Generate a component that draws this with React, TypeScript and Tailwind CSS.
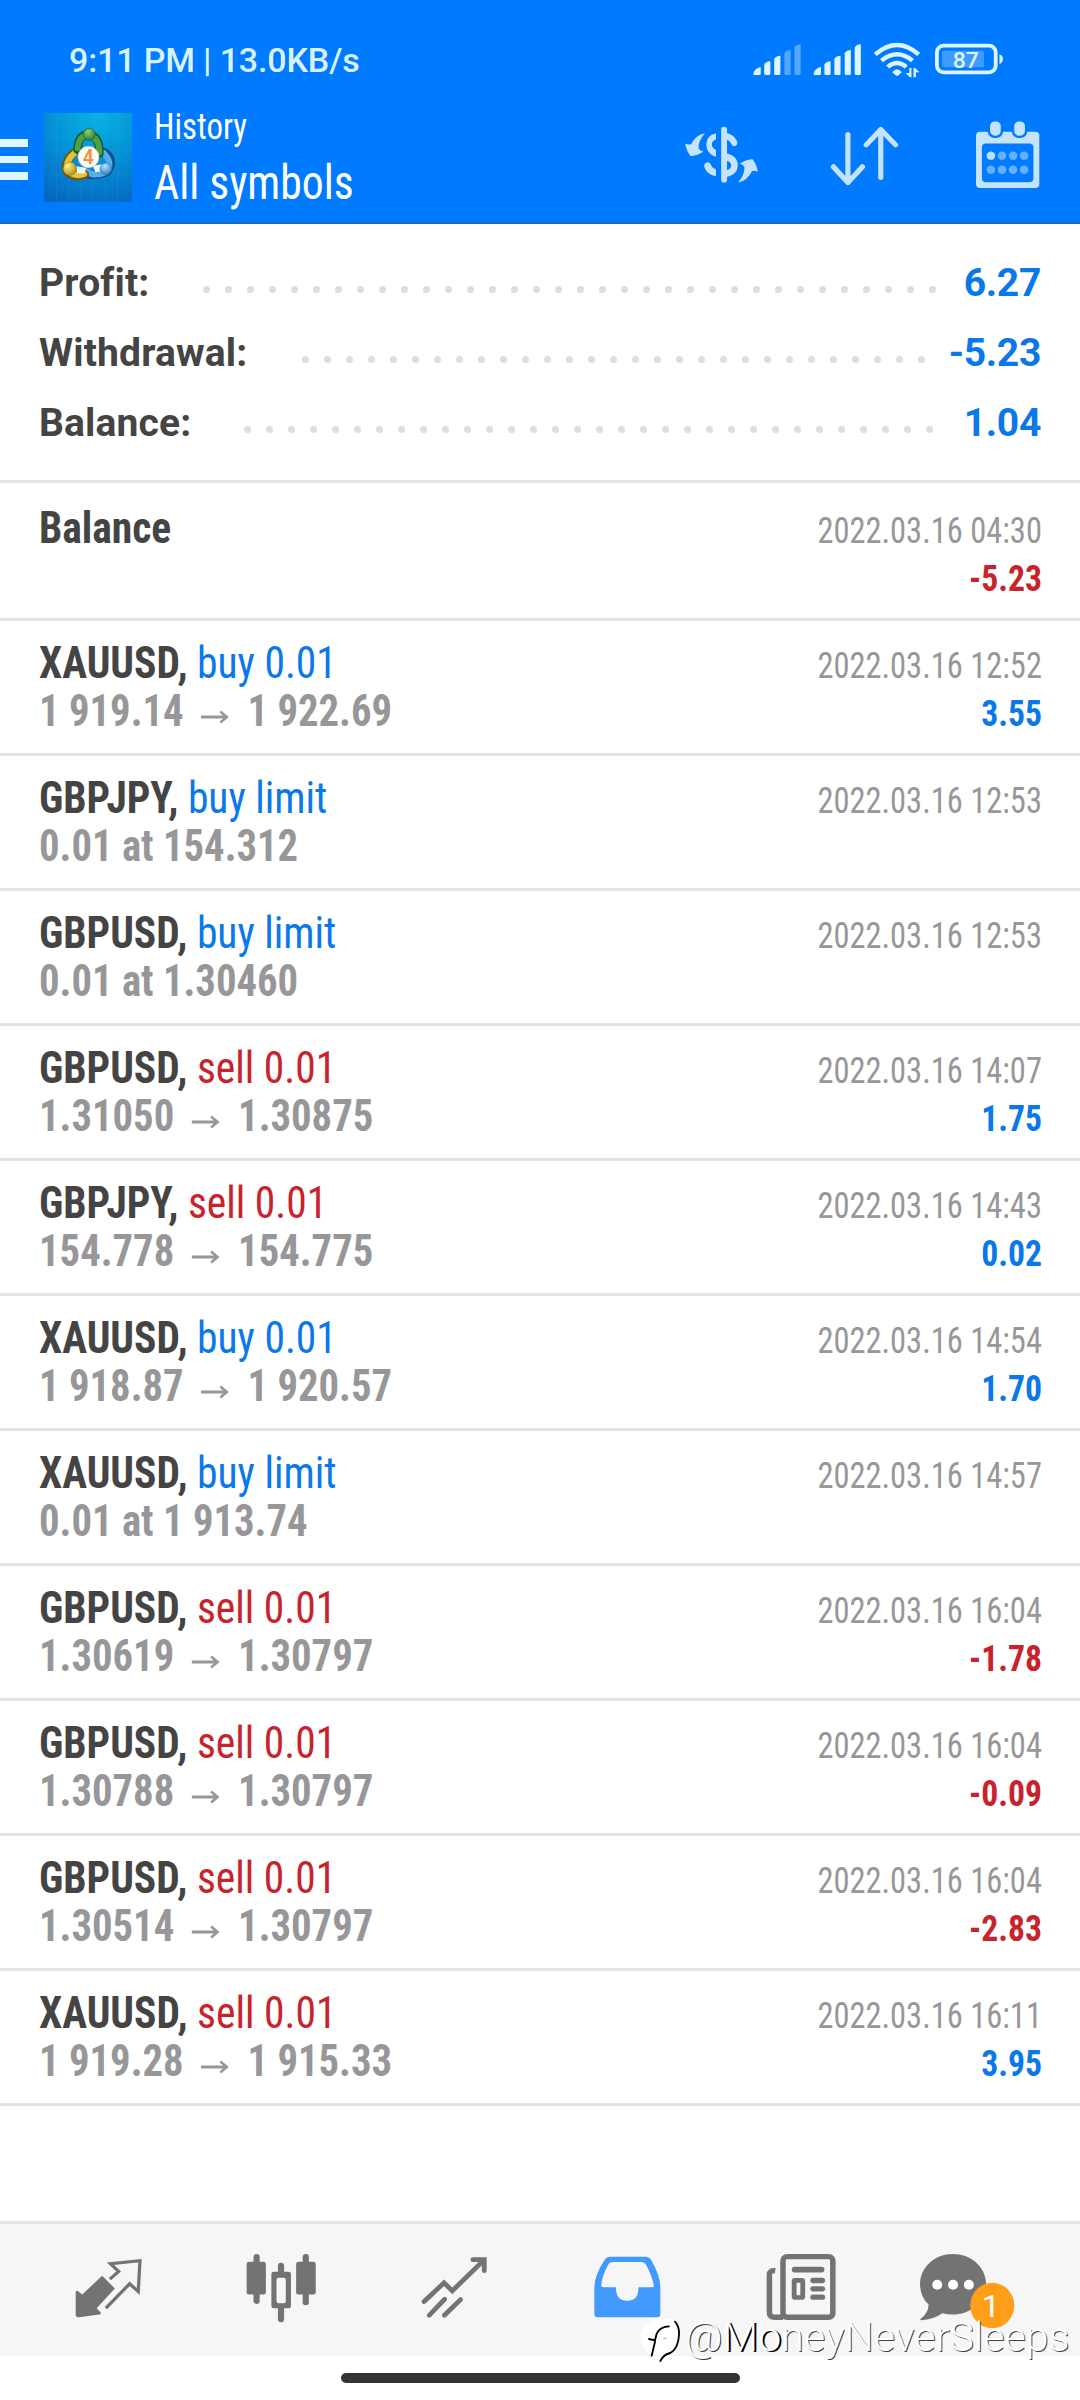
import type { ReactNode } from 'react';

type Side = 'buy' | 'sell';

interface Deal {
  symbol: string;
  side: Side;
  action: string;
  detail?: string;
  from?: string;
  to?: string;
  time: string;
  profit?: string;
}

const deals: Deal[] = [
  { symbol: 'XAUUSD', side: 'buy', action: 'buy 0.01', from: '1 919.14', to: '1 922.69', time: '2022.03.16 12:52', profit: '3.55' },
  { symbol: 'GBPJPY', side: 'buy', action: 'buy limit', detail: '0.01 at 154.312', time: '2022.03.16 12:53' },
  { symbol: 'GBPUSD', side: 'buy', action: 'buy limit', detail: '0.01 at 1.30460', time: '2022.03.16 12:53' },
  { symbol: 'GBPUSD', side: 'sell', action: 'sell 0.01', from: '1.31050', to: '1.30875', time: '2022.03.16 14:07', profit: '1.75' },
  { symbol: 'GBPJPY', side: 'sell', action: 'sell 0.01', from: '154.778', to: '154.775', time: '2022.03.16 14:43', profit: '0.02' },
  { symbol: 'XAUUSD', side: 'buy', action: 'buy 0.01', from: '1 918.87', to: '1 920.57', time: '2022.03.16 14:54', profit: '1.70' },
  { symbol: 'XAUUSD', side: 'buy', action: 'buy limit', detail: '0.01 at 1 913.74', time: '2022.03.16 14:57' },
  { symbol: 'GBPUSD', side: 'sell', action: 'sell 0.01', from: '1.30619', to: '1.30797', time: '2022.03.16 16:04', profit: '-1.78' },
  { symbol: 'GBPUSD', side: 'sell', action: 'sell 0.01', from: '1.30788', to: '1.30797', time: '2022.03.16 16:04', profit: '-0.09' },
  { symbol: 'GBPUSD', side: 'sell', action: 'sell 0.01', from: '1.30514', to: '1.30797', time: '2022.03.16 16:04', profit: '-2.83' },
  { symbol: 'XAUUSD', side: 'sell', action: 'sell 0.01', from: '1 919.28', to: '1 915.33', time: '2022.03.16 16:11', profit: '3.95' },
];

const summary = [
  { label: 'Profit:', value: '6.27', dots: 34, width: 'w-[105px]' },
  { label: 'Withdrawal:', value: '-5.23', dots: 29, width: 'w-[116px]' },
  { label: 'Balance:', value: '1.04', dots: 32, width: 'w-[108px]' },
];

function StatusIcons() {
  const bars = [
    { x: 0, y: 201 },
    { x: 31, y: 184 },
    { x: 60, y: 167 },
    { x: 90, y: 150 },
    { x: 119, y: 133 },
  ];
  return (
    <svg className="h-[40px] w-[258px]" viewBox="600 120 750 120" preserveAspectRatio="none" fill="#dcf5ff">
      {[619, 794].map((x0, g) =>
        bars.map((b, i) => (
          <path
            key={`${g}-${i}`}
            opacity={g === 0 && i > 2 ? 0.38 : 1}
            d={
              i === 0
                ? `M${x0} 225v-6q4 -14 21 -18v20q0 4 -4 4z`
                : `M${x0 + b.x} 221V${b.y + 10}q4 -9 18 -10V221q0 4 -4 4h-10q-4 0 -4 -4z`
            }
          />
        )),
      )}
      <g fill="none" stroke="#dcf5ff" strokeWidth="13">
        <path d="M973 163q63 -56 126 0" />
        <path d="M991 182q45 -38 90 0" />
        <path d="M1009 201q27 -24 54 0" />
      </g>
      <path d="M1022 217q14 -18 28 0l-10 9q-4 3 -8 0z" />
      <path d="M1072 204h6v28h-4l-13 -13h11zM1084 232v-28h5l12 13h-10v15z" />
      <rect x="1152" y="137" width="171" height="80" rx="20" fill="none" stroke="#dcf5ff" strokeWidth="11" />
      <rect x="1167" y="152" width="122" height="50" rx="5" opacity="0.28" />
      <path d="M1334 163q10 3 10 14t-10 15z" />
      <text x="1236" y="204" textAnchor="middle" fontSize="67" fontFamily="Roboto, sans-serif" fontWeight="500">
        87
      </text>
    </svg>
  );
}

function AppLogo() {
  return (
    <svg className="h-[89px] w-[88px]" viewBox="10 38 267 267" preserveAspectRatio="none">
      <defs>
        <radialGradient id="sky" cx="0.6" cy="0" r="1.1">
          <stop offset="0" stopColor="#06b4e0" />
          <stop offset="0.5" stopColor="#0590d6" />
          <stop offset="1" stopColor="#0567c0" />
        </radialGradient>
        <radialGradient id="gr" cx="0.4" cy="0.3" r="0.8">
          <stop offset="0" stopColor="#8fcf6c" />
          <stop offset="1" stopColor="#1d7a35" />
        </radialGradient>
        <radialGradient id="ye" cx="0.35" cy="0.3" r="0.8">
          <stop offset="0" stopColor="#fff08a" />
          <stop offset="1" stopColor="#b38a10" />
        </radialGradient>
        <radialGradient id="bl" cx="0.4" cy="0.3" r="0.8">
          <stop offset="0" stopColor="#b4e4ff" />
          <stop offset="1" stopColor="#1c74bd" />
        </radialGradient>
      </defs>
      <rect x="10" y="38" width="267" height="267" fill="url(#sky)" />
      <path
        d="M48 38v267M85 38v267M122 38v267M159 38v267M196 38v267M233 38v267M10 75h267M10 112h267M10 149h267M10 186h267M10 223h267M10 260h267"
        stroke="#35b5ee"
        strokeWidth="1.5"
        opacity="0.3"
      />
      <g fill="none" strokeLinecap="round">
        <path d="M138 222q40 4 64 -8q24 -34 -8 -58" stroke="#0a4f8f" strokeWidth="26" />
        <path d="M140 213q22 18 60 2q21 -28 -10 -58" stroke="#56aee8" strokeWidth="18" />
        <path d="M102 157q-34 26 -22 56q20 22 54 10" stroke="#6b5a12" strokeWidth="26" />
        <path d="M102 159q-30 26 -20 52q20 20 50 10" stroke="#dfc43c" strokeWidth="18" />
        <path d="M112 148q2 -48 34 -44q34 4 32 56" stroke="#155a2c" strokeWidth="26" />
        <path d="M112 144q4 -42 34 -38q32 4 32 50" stroke="#4ca344" strokeWidth="18" />
      </g>
      <path d="M108 198l30 4l-6 18l-22 -2zM158 196l28 -4l2 20l-22 4z" fill="#eef6fb" />
      <circle cx="147" cy="102" r="18" fill="url(#gr)" stroke="#175d2c" strokeWidth="2" />
      <circle cx="88" cy="205" r="20" fill="url(#ye)" stroke="#8a6d10" strokeWidth="1.5" />
      <circle cx="198" cy="205" r="18" fill="url(#bl)" stroke="#165f9d" strokeWidth="1.5" />
      <circle cx="145" cy="170" r="32" fill="#fffaf4" stroke="#d8c9b0" strokeWidth="2" />
      <text x="144" y="190" textAnchor="middle" fontSize="58" fontWeight="600" fontFamily="Roboto, sans-serif" fill="#f08f45">
        4
      </text>
    </svg>
  );
}

function HeaderIcon({ box, label, children }: { box: string; label: string; children: ReactNode }) {
  return (
    <button aria-label={label}>
      <svg className="block h-[74px] w-[83px]" viewBox={box} preserveAspectRatio="none" fill="#c6e3fd">
        {children}
      </svg>
    </button>
  );
}

function NavIcon({ box, label, color, children }: { box: string; label: string; color: string; children: ReactNode }) {
  return (
    <button aria-label={label} className="flex w-[173px] shrink-0 justify-center">
      <svg className="block h-[80px] w-[110px]" viewBox={box} preserveAspectRatio="none" fill={color} stroke="none">
        {children}
      </svg>
    </button>
  );
}

function SummaryRow({ label, value, dots, width }: { label: string; value: string; dots: number; width: string }) {
  return (
    <div className="flex h-[70px] items-center justify-between">
      <span className="tracking-[0.15px]">{label}</span>
      <div className="flex items-center">
        <div className="mt-[12px] flex gap-[15px]">
          {Array.from({ length: dots }, (_, i) => (
            <i key={i} className="size-[7px] rounded-full bg-[#dedede]" />
          ))}
        </div>
        <span className={`text-right tracking-[-0.3px] text-[#0b78ea] ${width}`}>{value}</span>
      </div>
    </div>
  );
}

function DealResult({ time, profit }: { time: string; profit?: string }) {
  return (
    <div className="flex flex-col items-end text-[36px]">
      <span className="origin-right scale-x-[0.902] text-[#97979a]">{time}</span>
      {profit && (
        <span
          className={
            profit.startsWith('-')
              ? 'origin-right scale-x-[0.935] font-bold text-[#c8232c]'
              : 'origin-right scale-x-[0.935] font-bold text-[#0b78ea]'
          }
        >
          {profit}
        </span>
      )}
    </div>
  );
}

function DealRow({ deal }: { deal: Deal }) {
  return (
    <div className="flex h-[135px] justify-between border-b-[3px] border-[#e3e3e3] pt-[18px] pr-[38px] pl-[39px] leading-[48px]">
      <div className="flex flex-col text-[44px]">
        <div className="origin-left scale-x-[0.943]">
          <span className="font-bold text-[#444]">{deal.symbol},</span>{' '}
          <span className={deal.side === 'buy' ? 'text-[#0b78ea]' : 'text-[#c8232c]'}>{deal.action}</span>
        </div>
        <div className="flex origin-left scale-x-[0.925] self-start font-bold text-[#97979a]">
          {deal.detail ?? (
            <>
              <span>{deal.from}</span>
              <svg
                className="mt-[23px] mr-[20px] ml-[19px] h-[14px] w-[30px]"
                viewBox="0 0 30 14"
                fill="none"
                stroke="#97979a"
                strokeWidth="2.8"
              >
                <path d="M0 7H28M21 1.5L28 7L21 12.5" />
              </svg>
              <span>{deal.to}</span>
            </>
          )}
        </div>
      </div>
      <div className="pt-[3px]">
        <DealResult time={deal.time} profit={deal.profit} />
      </div>
    </div>
  );
}

export default function App() {
  const gray = '#737373';
  return (
    <div className="relative flex h-[2400px] w-[1080px] flex-col overflow-hidden bg-white font-['Roboto',sans-serif]">
      <header className="flex h-[224px] shrink-0 flex-col border-b-2 border-[#1b69b8] bg-[#007aff]">
        <div className="flex h-[103px] shrink-0 justify-between pt-[40px] pr-[75px] pl-[69px]">
          <span className="text-[34px] leading-[41px] font-medium tracking-[-0.15px] text-[#d9f2ff]">9:11 PM | 13.0KB/s</span>
          <StatusIcons />
        </div>
        <div className="flex items-start">
          <button aria-label="Menu" className="mt-[36px] flex w-[28px] flex-col gap-[9px]">
            <i className="h-[7.5px] bg-[#e2f8ff]" />
            <i className="h-[7.5px] bg-[#e2f8ff]" />
            <i className="h-[7.5px] bg-[#e2f8ff]" />
          </button>
          <div className="mt-[10px] ml-[16px]">
            <AppLogo />
          </div>
          <div className="ml-[22px] flex flex-col items-start text-white [font-stretch:75%]">
            <span className="origin-left scale-x-[0.915] text-[36px] leading-[48px]">History</span>
            <span className="origin-left scale-x-[0.91] text-[48px] leading-[64px]">All symbols</span>
          </div>
          <div className="mt-[16px] mr-[31px] ml-auto flex gap-[60px]">
            <HeaderIcon box="409 360 240 220" label="Symbol">
              <rect x="528" y="383" width="17" height="166" rx="8" />
              <path d="M513 402v19q-12 4 -12 15q0 10 12 16v21q-28 -10 -28 -37q0 -28 28 -34z" />
              <path d="M513 530v-20q-12 -5 -15 -15q-4 -8 -12 -6q-8 3 -7 12q6 24 34 29z" />
              <path d="M540 400q28 6 35 30q-1 10 -8 11q-7 0 -9 -6q-6 -14 -18 -15z" />
              <path fillRule="evenodd" d="M540 461q36 8 36 36q0 30 -36 36zM544 484v28q13 -4 13 -14q0 -10 -13 -14z" />
              <path d="M424 433q10 5 17 2q13 -28 40 -33q-21 25 -18 46q4 7 14 9q-16 11 -37 14q-13 -16 -16 -38z" />
              <path d="M634 517q-10 -5 -17 -2q-13 28 -40 34q21 -26 18 -47q-4 -7 -13 -10q16 -11 36 -13q13 16 16 38z" />
            </HeaderIcon>
            <HeaderIcon box="824 360 240 220" label="Sort">
              <path
                d="M896 406V549M854 502L896 549L938 502M991 534V391M949 437L991 391L1034 437"
                fill="none"
                stroke="#c6e3fd"
                strokeWidth="15"
                strokeLinecap="round"
                strokeLinejoin="round"
              />
            </HeaderIcon>
            <HeaderIcon box="1240 360 240 220" label="Period">
              <path
                fillRule="evenodd"
                d="M1281 398H1440Q1452 398 1452 410V553Q1452 565 1440 565H1281Q1269 565 1269 553V410Q1269 398 1281 398ZM1298 433Q1286 433 1286 445V536Q1286 548 1298 548H1423Q1435 548 1435 536V445Q1435 433 1423 433Z"
              />
              <rect x="1306" y="364" width="38" height="49" rx="17" stroke="#007aff" strokeWidth="7" />
              <rect x="1376" y="364" width="38" height="49" rx="17" stroke="#007aff" strokeWidth="7" />
              {[469, 511].map((y) =>
                [1312, 1344, 1376, 1408].map((x) => (
                  <circle key={`${x}-${y}`} cx={x} cy={y} r="12.5" fill={x === 1312 && y === 469 ? '#b8e4ff' : '#63b1ff'} />
                )),
              )}
            </HeaderIcon>
          </div>
        </div>
      </header>

      <section className="h-[259px] shrink-0 border-b-[3px] border-[#e3e3e3] pt-[24px] pr-[39px] pl-[39px] text-[39px] font-bold text-[#444]">
        {summary.map((s) => (
          <SummaryRow key={s.label} {...s} />
        ))}
      </section>

      <main className="grow [font-stretch:75%]">
        <div className="flex h-[138px] justify-between border-b-[3px] border-[#e3e3e3] pt-[21px] pr-[38px] pl-[39px] leading-[48px]">
          <span className="origin-left scale-x-[0.943] text-[44px] font-bold text-[#444]">Balance</span>
          <div className="pt-[3px]">
            <DealResult time="2022.03.16 04:30" profit="-5.23" />
          </div>
        </div>
        {deals.map((d, i) => (
          <DealRow key={i} deal={d} />
        ))}
      </main>

      <nav className="flex h-[135px] shrink-0 justify-center border-t-[3px] border-[#e3e3e3] bg-[#f6f6f6] pt-[26px]">
        <NavIcon box="154 150 320 239" label="Quotes" color={gray}>
          <path d="M220 277q0 -8 7 -4l12 10L297 227L334 265L281 324L292 336Q296 342 288 343L230 351Q220 352 220 343Z" />
          <path
            d="M323 234L345 214L321 191L407 182L402 274L377 251L311 320"
            fill="none"
            stroke={gray}
            strokeWidth="9.5"
            strokeLinejoin="miter"
            strokeLinecap="square"
          />
        </NavIcon>
        <NavIcon box="656 150 320 239" label="Charts" color={gray}>
          <rect x="716" y="185" width="56" height="98" rx="7" />
          <rect x="736" y="162" width="18" height="149" rx="9" />
          <rect x="860" y="185" width="57" height="98" rx="7" />
          <rect x="879" y="162" width="18" height="153" rx="9" />
          <path
            fillRule="evenodd"
            d="M795 215H838Q845 215 845 222V317Q845 324 838 324H795Q788 324 788 317V222Q788 215 795 215ZM809 233Q803 233 803 239V302Q803 309 809 309H824Q830 309 830 302V239Q830 233 824 233Z"
          />
          <path d="M807 218V197q0 -9 9 -9t9 9v21zM807 320v37q0 9 9 9t9 -9v-37z" />
        </NavIcon>
        <NavIcon box="1158 150 320 239" label="Trade" color="none">
          <g stroke={gray} strokeWidth="14" strokeLinecap="round">
            <path d="M1231 304L1289 248L1313 272L1405 180M1373 179H1406V212" strokeLinejoin="miter" />
            <path d="M1246 345L1291 297M1290 345L1337 298" />
          </g>
        </NavIcon>
        <NavIcon box="93 150 320 239" label="History" color="#429afc">
          <path
            fillRule="evenodd"
            d="M203 170H308Q318 170 322 178Q350 226 350 262V342Q350 351 341 351H168Q158 351 158 342V262Q158 226 189 178Q194 170 203 170ZM212 186Q202 186 198 195Q180 228 178 256Q178 261 185 261H221V270Q224 302 254 302Q284 302 286 270V261H326Q332 261 331 256Q326 228 309 195Q304 186 296 186Z"
          />
        </NavIcon>
        <NavIcon box="595 150 320 239" label="News" color={gray}>
          <rect x="705.5" y="170" width="145" height="181" rx="12" fill="none" stroke={gray} strokeWidth="16" />
          <path d="M683 212Q666 210 666 224V336Q666 351 682 351H706" fill="none" stroke={gray} strokeWidth="16" />
          <rect x="731" y="200" width="95" height="17" rx="8.5" />
          <rect x="738" y="241" width="25" height="51" rx="3" fill="none" stroke={gray} strokeWidth="14" />
          <rect x="785" y="233" width="43" height="16" rx="8" />
          <rect x="785" y="258" width="43" height="16" rx="8" />
          <rect x="785" y="283" width="43" height="16" rx="8" />
        </NavIcon>
        <NavIcon box="1097 150 320 239" label="Messages" color={gray}>
          <path d="M1198 162C1252 162 1295 202 1295 252C1295 305 1250 343 1198 343Q1183 343 1168 339Q1142 358 1106 360Q1101 359 1106 355Q1127 338 1128 313Q1103 290 1103 252C1103 202 1146 162 1198 162Z" />
          <g fill="#fff">
            <ellipse cx="1153" cy="254" rx="14.5" ry="15" />
            <ellipse cx="1199" cy="254" rx="14.5" ry="15" />
            <ellipse cx="1245" cy="254" rx="14.5" ry="15" />
          </g>
          <ellipse cx="1313" cy="316" rx="64" ry="68" fill="#ff9e18" />
          <text x="1309" y="350" textAnchor="middle" fontSize="94" fontFamily="Roboto, sans-serif" fill="#fff">
            1
          </text>
        </NavIcon>
      </nav>

      <div className="flex h-[44px] shrink-0 justify-center pt-[17px]">
        <i className="h-[10px] w-[399px] rounded-full bg-[#333]" />
      </div>

      <div className="absolute top-[2309px] left-[639px] flex items-center text-[41px] leading-[34px] font-light tracking-[0.1px] text-white">
        <svg className="h-[56px] w-[46px]" viewBox="60 30 138 168" fill="none" stroke="#000" strokeLinecap="round">
          <path d="M120 58Q170 50 182 96Q182 150 135 165L124 184Q110 160 92 165Q62 140 64 110Q70 66 120 58Z" fill="#fff" stroke="none" />
          <path d="M98 170L108 128M90 120L108 124L113 104Q124 82 150 82" strokeWidth="5.5" />
          <path d="M168 68Q182 84 180 108Q178 148 154 162Q134 166 124 186" strokeWidth="5.5" />
          <path d="M134 118h8" strokeWidth="2" stroke="#777" />
        </svg>
        <span className="[text-shadow:1px_1px_0_#333]">@</span>
        <span className="[text-shadow:2px_1px_0_#000]">Mo</span>
        <span className="[text-shadow:1px_1px_0_#444]">neyNeverSleeps</span>
      </div>
    </div>
  );
}
